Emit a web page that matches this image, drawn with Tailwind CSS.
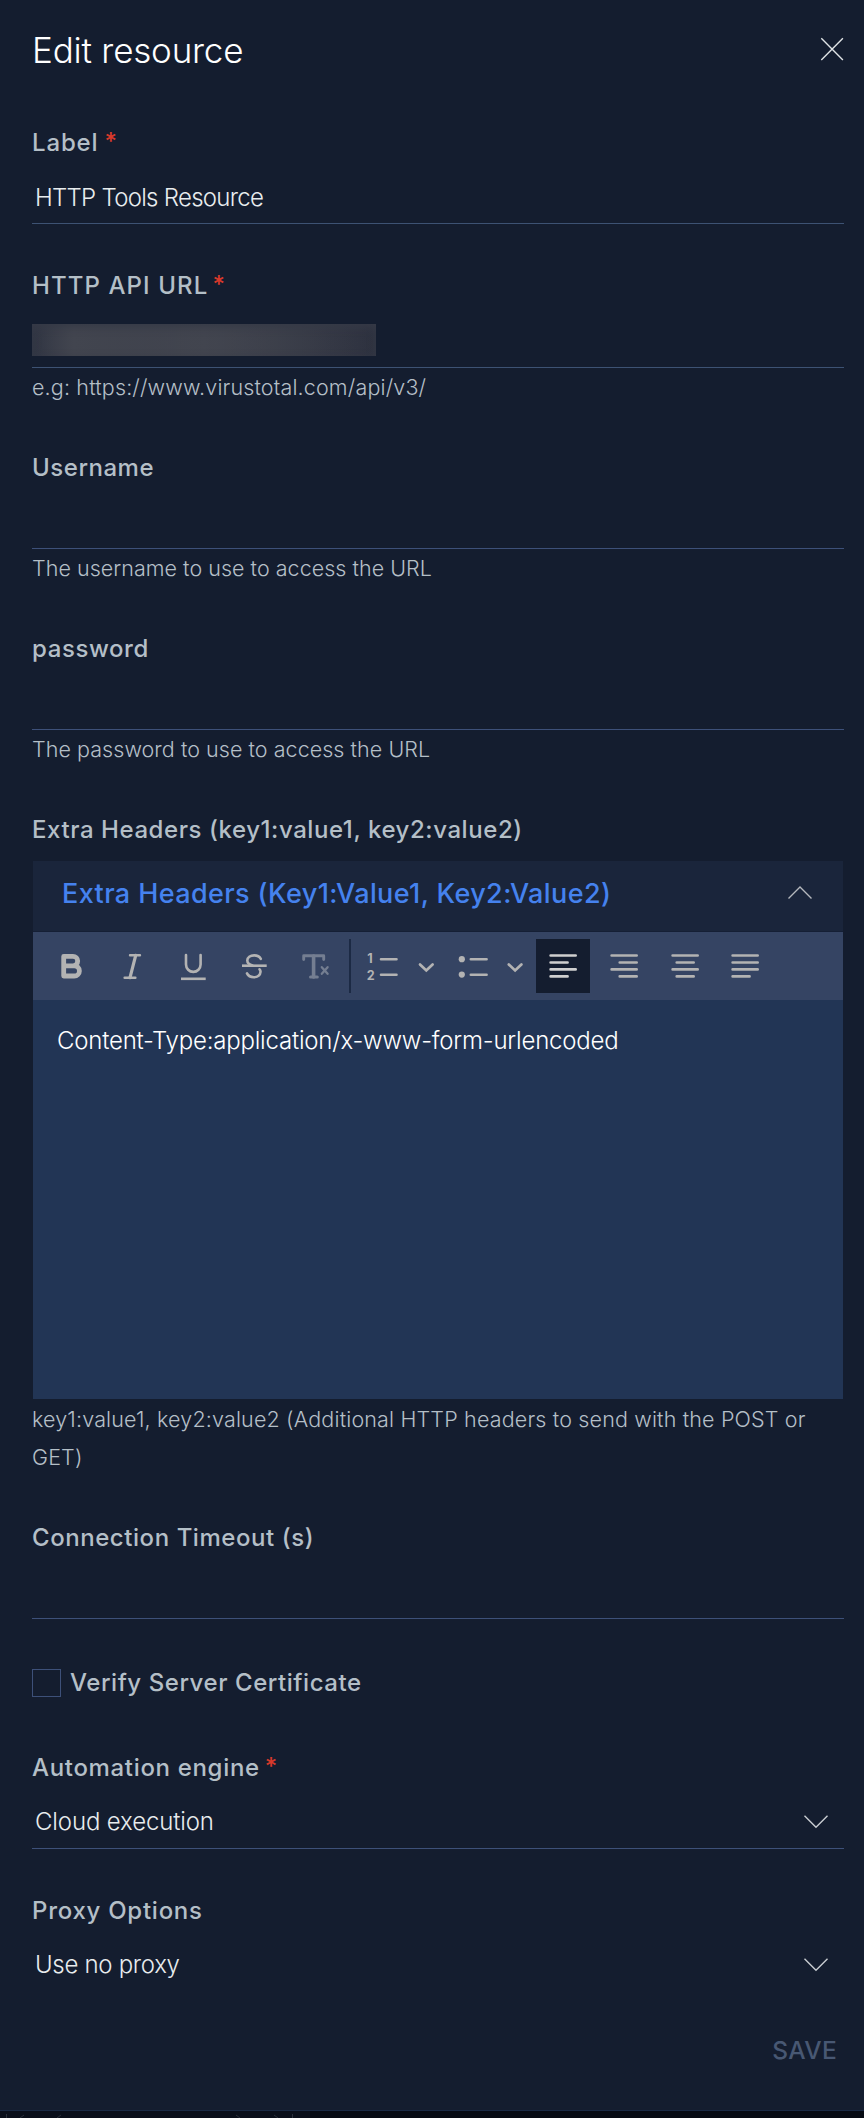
<!DOCTYPE html>
<html lang="en">
<head>
<meta charset="utf-8">
<title>Edit resource</title>
<script src="https://cdn.jsdelivr.net/npm/@tailwindcss/browser@4"></script>
</head>
<body class="bg-[#070b14] font-['Inter',sans-serif] text-2xl text-[#b4bfc7]">
<main class="flex h-[2111px] flex-col border-b border-[#1a2a45] bg-[#141d2f] pl-8 pr-5">
  <header class="flex h-[124px] items-start justify-between">
    <h1 class="mt-[27px] text-[35px] leading-[46px] font-light tracking-[-0.2px] text-white">Edit resource</h1>
    <svg class="mt-[37px] h-6 w-6" viewBox="0 0 24 24" fill="none" stroke="#dfe3e5" stroke-width="1.4"><path d="M1.3 1.3 22.9 22.9M22.9 1.3 1.3 22.9"/></svg>
  </header>

  <form class="flex flex-col gap-[43px]">
    <section>
      <div class="flex h-9 gap-[6px] font-medium leading-[38px]"><label class="tracking-[0.85px]">Label</label><span class="leading-9 text-[#d8392b]">*</span></div>
      <div class="h-16 border-b border-[#3d5273] pt-[19px] pl-[3px] leading-[38px] font-light tracking-[-0.72px] text-[#e8ecee]">HTTP Tools Resource</div>
    </section>

    <section>
      <div class="flex h-9 gap-[4px] font-medium leading-[38px]"><label class="tracking-[1.1px]">HTTP API URL</label><span class="leading-9 text-[#d8392b]">*</span></div>
      <div class="h-[65px] border-b border-[#3d5273] pt-[21px]">
        <div class="h-8 w-[344px] bg-linear-to-r from-[#2f3442] via-[#42454f] via-50% to-[#2d313f]">
          <div class="h-full w-full bg-linear-to-r from-transparent from-0% via-[#42454f] via-12% to-transparent to-100% shadow-[inset_0_3px_8px_#363a47]"></div>
        </div>
      </div>
      <p class="h-[38px] text-[21.5px] leading-[38px] font-light tracking-[0.15px]">e.g: https://www.virustotal.com/api/v3/</p>
    </section>

    <section>
      <label class="block h-9 font-medium leading-[38px] tracking-[0.53px]">Username</label>
      <div class="h-16 border-b border-[#3d5079]"></div>
      <p class="h-[38px] text-[21.5px] leading-[38px] font-light tracking-[0.03px]">The username to use to access the URL</p>
    </section>

    <section>
      <label class="block h-9 font-medium leading-[38px] tracking-[0.59px]">password</label>
      <div class="h-16 border-b border-[#3d5079]"></div>
      <p class="h-[38px] text-[21.5px] leading-[38px] font-light tracking-[0.05px]">The password to use to access the URL</p>
    </section>

    <section>
      <label class="block h-[50px] font-medium leading-[38px] tracking-[0.57px]">Extra Headers (key1:value1, key2:value2)</label>
      <div class="mx-px">
        <div class="flex h-[71px] items-start justify-between border-b border-[#151f35] bg-[#1a253b] pr-[30px] pl-[29px]">
          <h2 class="mt-[14px] text-[27px] leading-[38px] font-medium tracking-[0.39px] text-[#4582ee]">Extra Headers (Key1:Value1, Key2:Value2)</h2>
          <svg class="mt-6 h-[15px] w-[26px]" viewBox="0 0 26 15" fill="none" stroke="#b5b8bd" stroke-width="1.4"><path d="M1.5 13.5 13 2 24.5 13.5"/></svg>
        </div>
        <div class="flex h-[68px] items-center bg-[#354463] pl-[11px] text-[#b3b3b3]">
          <div class="flex gap-[7px]">
            <svg class="h-[54px] w-[54px]" viewBox="0 0 54 54" fill="none" stroke="currentColor" stroke-width="4.8" stroke-linejoin="round"><path d="M19.7 17.4h9.3a4.7 4.7 0 0 1 0 9.4h-9.3zM19.7 26.8h10.6a5.1 5.1 0 0 1 0 10.2H19.7z"/></svg>
            <svg class="h-[54px] w-[54px]" viewBox="0 0 54 54" fill="none" stroke="currentColor" stroke-width="2.4" stroke-linecap="round"><path d="M25 16.3h10M19.6 38.7h10.8"/><path d="M30.7 16.3 25 38.7" stroke-width="3.2"/></svg>
            <svg class="h-[54px] w-[54px]" viewBox="0 0 54 54" fill="none" stroke="currentColor" stroke-width="2.6"><path d="M20 16v9.6a7.3 7.3 0 0 0 14.6 0V16" stroke-linecap="round"/><path d="M15 39.8h24.7"/></svg>
            <svg class="h-[54px] w-[54px]" viewBox="0 0 54 54" fill="none" stroke="currentColor" stroke-width="2.6" stroke-linecap="round"><path d="M33.8 19.8c-1.2-2.2-3.7-3.4-6.6-3.4-4 0-6.9 2.1-6.9 5.2 0 2.5 1.9 4.1 5.2 5M32.6 30.3c.7.8 1 1.5.9 2.5-.2 3.2-2.8 5.4-6.6 5.4-3.3 0-5.7-1.3-6.9-3.8"/><path d="M15 26.7h24.7" stroke-linecap="butt"/></svg>
            <svg class="h-[54px] w-[54px] text-[#747e91]" viewBox="0 0 54 54" fill="none" stroke="currentColor" stroke-width="3.6" stroke-linecap="round" stroke-linejoin="round"><path d="M15.7 20.6v-3.9h20v3.9" stroke-width="2.9"/><path d="M25.6 17v21"/><path d="M22.5 38h6.8" stroke-width="3"/><path d="m33.8 28.2 5.8 6.6M39.6 28.2l-5.8 6.6" stroke-width="2.3"/></svg>
          </div>
          <div class="ml-[7px] h-[54px] w-0.5 bg-[#1c2a44]"></div>
          <div class="ml-[5px] flex">
            <svg class="h-[54px] w-[54px]" viewBox="0 0 54 54" fill="none" stroke="currentColor" stroke-width="2.6" stroke-linecap="round"><path d="M25 20.3h15.5M25 35.7h15.5"/><g fill="currentColor" stroke="none" font-size="12.6" font-weight="700"><text x="11.3" y="24">1</text><text x="10.7" y="41.3">2</text></g></svg>
            <svg class="h-[54px] w-8" viewBox="0 0 32 54" fill="none" stroke="currentColor" stroke-width="2.7" stroke-linecap="round"><path d="m10 25.5 6.3 6 6.3-6"/></svg>
          </div>
          <div class="ml-[5px] flex">
            <svg class="h-[54px] w-[54px]" viewBox="0 0 54 54" fill="none" stroke="currentColor" stroke-width="2.6" stroke-linecap="round"><path d="M23.8 20.3h15.8M23.8 35.7h15.8"/><g fill="currentColor" stroke="none"><circle cx="14.8" cy="20.2" r="3.1"/><circle cx="14.8" cy="35.6" r="3.1"/></g></svg>
            <svg class="h-[54px] w-7" viewBox="0 0 28 54" fill="none" stroke="currentColor" stroke-width="2.7" stroke-linecap="round"><path d="m7.8 25.5 6.3 6 6.3-6"/></svg>
          </div>
          <div class="ml-[7px] flex gap-[7px]">
            <svg class="h-[54px] w-[54px] bg-[#141d2f] text-[#cfcfcf]" viewBox="0 0 54 54" fill="none" stroke="currentColor" stroke-width="2.6" stroke-linecap="round"><path d="M14.6 16.5h25.1M14.6 23.5h17M14.6 30.4h25.1M14.6 37.4h17"/></svg>
            <svg class="h-[54px] w-[54px]" viewBox="0 0 54 54" fill="none" stroke="currentColor" stroke-width="2.6" stroke-linecap="round"><path d="M14.6 16.5h25.1M22.7 23.5h17M14.6 30.4h25.1M22.7 37.4h17"/></svg>
            <svg class="h-[54px] w-[54px]" viewBox="0 0 54 54" fill="none" stroke="currentColor" stroke-width="2.6" stroke-linecap="round"><path d="M14.6 16.5h25.1M18.7 23.5h17M14.6 30.4h25.1M18.7 37.4h17"/></svg>
            <svg class="h-[54px] w-[54px]" viewBox="0 0 54 54" fill="none" stroke="currentColor" stroke-width="2.6" stroke-linecap="round"><path d="M13.6 16.5h25.1M13.6 23.5h25.1M13.6 30.4h25.1M13.6 37.4h17"/></svg>
          </div>
        </div>
        <div class="h-[399px] bg-[#223555] pt-[22px] pl-6 leading-[38px] font-light tracking-[-0.2px] text-white">Content-Type:application/x-www-form-urlencoded</div>
      </div>
      <p class="h-[77px] pt-px text-[21.5px] leading-[38px] font-light tracking-[0.16px]">key1:value1, key2:value2 (Additional HTTP headers to send with the POST or<br>GET)</p>
    </section>

    <section>
      <label class="block h-9 font-medium leading-[38px] tracking-[0.56px]">Connection Timeout (s)</label>
      <div class="h-16 border-b border-[#3d5079]"></div>
    </section>

    <section class="mt-[7px] flex h-7 items-center">
      <span class="h-7 w-[29px] border border-[#3d5079]"></span>
      <label class="ml-[9px] font-medium leading-[30px] tracking-[0.56px]">Verify Server Certificate</label>
    </section>

    <section class="mt-[9px]">
      <div class="flex h-9 gap-[5px] font-medium leading-[38px]"><label class="tracking-[0.67px]">Automation engine</label><span class="leading-9 text-[#d8392b]">*</span></div>
      <div class="flex h-16 items-start justify-between border-b border-[#3d5079] pr-[15px] pl-[3px] text-[#e8ecee]">
        <span class="mt-[18px] leading-[38px] font-light tracking-[-0.13px]">Cloud execution</span>
        <svg class="mt-[29px] h-[15px] w-[26px]" viewBox="0 0 26 15" fill="none" stroke="#c9cdd2" stroke-width="1.4"><path d="M1.5 1.8 13 13.2 24.5 1.8"/></svg>
      </div>
    </section>

    <section>
      <label class="block h-9 font-medium leading-[38px] tracking-[0.74px]">Proxy Options</label>
      <div class="flex h-16 items-start justify-between pr-[15px] pl-[3px] text-[#e8ecee]">
        <span class="mt-[18px] leading-[38px] font-light tracking-[-0.3px]">Use no proxy</span>
        <svg class="mt-[29px] h-[15px] w-[26px]" viewBox="0 0 26 15" fill="none" stroke="#c9cdd2" stroke-width="1.4"><path d="M1.5 1.8 13 13.2 24.5 1.8"/></svg>
      </div>
    </section>
  </form>

  <footer class="mt-10 flex justify-end pr-[7px]">
    <button class="text-[24.5px] leading-9 font-medium tracking-[0.3px] text-[#485873]">SAVE</button>
  </footer>
</main>
<!-- dimmed strip of the code panel behind the dialog -->
<div class="h-[7px] w-[310px] bg-[#0a0f1b]">
  <svg class="h-[7px] w-[310px]" viewBox="0 0 310 7" fill="none" stroke="#2a303c"><path d="M6.5 3v4M292.5 3v4M24 4l-4 3M61 4l-4 3M236 4l4 3M274 4l4 3"/></svg>
</div>
</body>
</html>
